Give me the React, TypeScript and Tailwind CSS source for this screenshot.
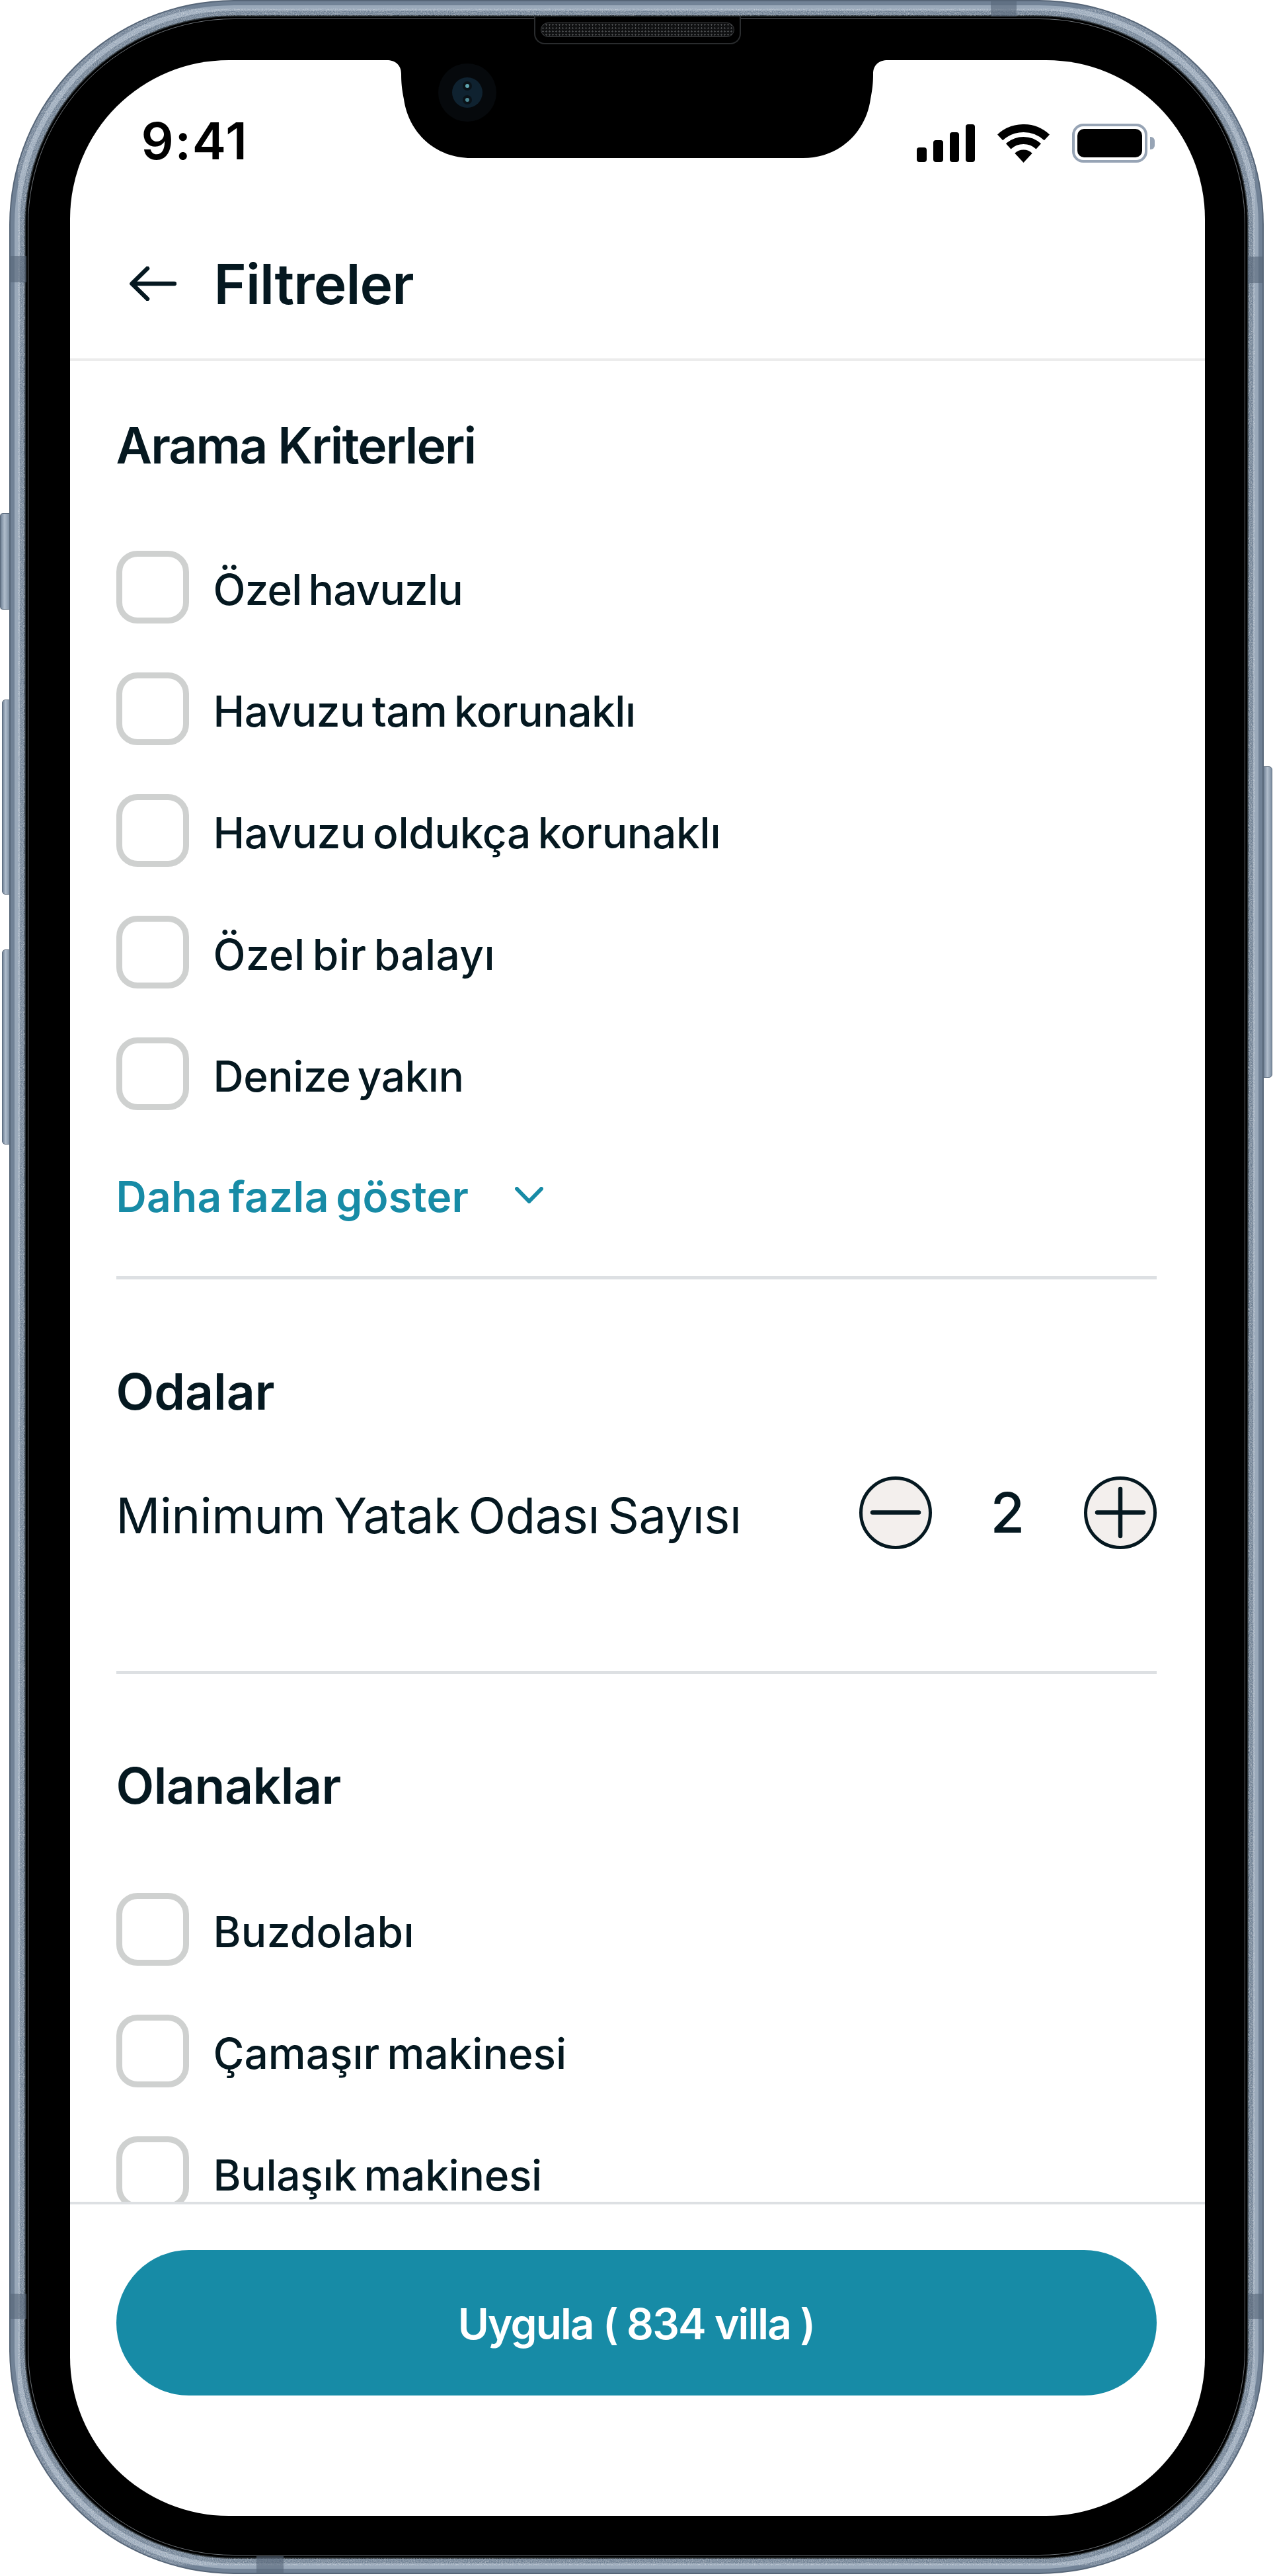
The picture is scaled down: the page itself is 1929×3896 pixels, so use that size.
import React from "react";

const ink = "#051820";

function CheckRow({ label, tracking }: { label: string; tracking: string }) {
  return (
    <div className="flex items-center h-[110px]">
      <div className="w-[110px] h-[110px] shrink-0 rounded-[32px] border-[9px] border-[#cfd1d0] bg-white" />
      <span className={`ml-[37px] mt-[9px] text-[64px] leading-[110px] font-medium [word-spacing:-6px] text-[#051820] ${tracking}`}>{label}</span>
    </div>
  );
}

function Heading({ children, className }: { children: React.ReactNode; className: string }) {
  return <h2 className={`text-[75px] leading-[100px] font-semibold text-[#051820] ${className}`}>{children}</h2>;
}

function Stepper({ plus }: { plus?: boolean }) {
  return (
    <svg viewBox="0 0 110 110" className="w-[110px] h-[110px] shrink-0">
      <circle cx="55" cy="55" r="52.5" fill="#f3efed" stroke={ink} strokeWidth="5" />
      <path d={plus ? "M20 54.5H90M55 19V90" : "M20 54.5H90"} stroke={ink} strokeWidth="6.5" strokeLinecap="round" fill="none" />
    </svg>
  );
}

function SideButton({ className }: { className: string }) {
  return <div className={`absolute bg-[linear-gradient(90deg,#718296,#b0bdcc_45%,#7f90a3)] border border-[#5a6a7c] ${className}`} />;
}

function Band({ className }: { className: string }) {
  return <div className={`absolute bg-[#566678]/60 ${className}`} />;
}

export default function App() {
  return (
    <div className="relative w-[1929px] h-[3896px] bg-white font-['Inter',sans-serif] overflow-hidden">
      <SideButton className="left-0 top-[776px] w-[15px] h-[146px] rounded-l-[4px]" />
      <SideButton className="left-[3px] top-[1058px] w-[12px] h-[295px] rounded-l-[5px]" />
      <SideButton className="left-[3px] top-[1436px] w-[12px] h-[295px] rounded-l-[5px]" />
      <SideButton className="left-[1911px] top-[1159px] w-[14px] h-[471px] rounded-r-[5px]" />

      {/* Phone body: metal rings, black bezel, screen */}
      <div className="ml-[14px] mt-0 w-[1898px] h-[3893px] rounded-[340px] bg-[#566577] p-[2px]">
        <div className="w-full h-full rounded-[338px] bg-[#718296] p-[6px]">
          <div className="w-full h-full rounded-[332px] bg-[#9aa9ba] p-[8px]">
            <div className="w-full h-full rounded-[324px] bg-[#708194] p-[7px]">
              <div className="w-full h-full rounded-[317px] bg-[#2b3339] p-[2px]">
                <div className="w-full h-full rounded-[315px] bg-black p-[3px]">
                  <div className="w-full h-full rounded-[312px] border-[1.5px] border-[#6a6f74] bg-black pl-[62.5px] pr-[55px] pt-[61.5px] pb-[51px]">
                    {/* Screen */}
                    <div className="w-[1717px] h-[3714px] rounded-[240px] bg-white overflow-hidden flex flex-col">
                      <div className="h-[246px] shrink-0 flex items-center justify-between pl-[108px] pr-[76px]">
                        <span className="text-[77px] font-semibold tracking-[1.7px] text-black">9:41</span>
                        <div className="flex items-center gap-[34px] mt-[6px]">
                          <svg viewBox="0 0 88 57" className="w-[88px] h-[57px]" fill="#000">
                            <rect x="0" y="35" width="15" height="22" rx="4" />
                            <rect x="25" y="24" width="15" height="33" rx="4" />
                            <rect x="50" y="12" width="14" height="45" rx="4" />
                            <rect x="74" y="0" width="14" height="57" rx="4" />
                          </svg>
                          <svg viewBox="0 0 79 58" className="w-[79px] h-[58px]">
                            <path d="M4.1 19.9A52 52 0 0 1 74.9 19.9" fill="none" stroke="#000" strokeWidth="12" />
                            <path d="M16.7 33.4A33.5 33.5 0 0 1 62.3 33.4" fill="none" stroke="#000" strokeWidth="11" />
                            <path d="M39.5 58L26.3 43.8A19.4 19.4 0 0 1 52.7 43.8Z" fill="#000" />
                          </svg>
                          <div className="flex items-center">
                            <div className="w-[114px] h-[59px] rounded-[17px] border-[4px] border-[#97a4b5] p-[4px]">
                              <div className="w-full h-full rounded-[10px] bg-black" />
                            </div>
                            <div className="ml-[4px] w-[7px] h-[19px] rounded-r-[6px] bg-[#97a4b5]" />
                          </div>
                        </div>
                      </div>

                      <div className="h-[209px] shrink-0 flex items-center pl-[90px] pb-[18px] border-b-[4px] border-[#ececec]">
                        <svg viewBox="0 0 71 52" className="w-[71px] h-[52px] -mt-[3px]" fill="none" stroke={ink} strokeWidth="6.5" strokeLinecap="round" strokeLinejoin="round">
                          <path d="M68 26H4M27 3L3.5 26L27 49" />
                        </svg>
                        <span className="ml-[57px] text-[84px] leading-none font-semibold tracking-[-0.9px] text-[#051820]">Filtreler</span>
                      </div>

                      <div className="flex-1 min-h-0 overflow-hidden pl-[70px] pr-[73px] pt-[78px]">
                        <Heading className="tracking-[-1.9px]">Arama Kriterleri</Heading>
                        <div className="mt-[109px] flex flex-col gap-[74px]">
                          <CheckRow label="Özel havuzlu" tracking="tracking-[-0.9px]" />
                          <CheckRow label="Havuzu tam korunaklı" tracking="tracking-[-0.5px]" />
                          <CheckRow label="Havuzu oldukça korunaklı" tracking="tracking-[-0.3px]" />
                          <CheckRow label="Özel bir balayı" tracking="tracking-[0.36px]" />
                          <CheckRow label="Denize yakın" tracking="tracking-[-0.5px]" />
                        </div>
                        <div className="mt-[91px] h-[80px] flex items-center">
                          <span className="text-[64px] font-semibold tracking-[0.3px] [word-spacing:-6px] text-[#178ba6]">Daha fazla göster</span>
                          <svg viewBox="0 0 43 25" className="ml-[70px] w-[43px] h-[25px] -mt-[5px]" fill="none" stroke="#178ba6" strokeWidth="6" strokeLinecap="round" strokeLinejoin="round">
                            <path d="M3 3L21.5 22L40 3" />
                          </svg>
                        </div>
                        <div className="mt-[80px] h-[5px] bg-[#dde0e3]" />

                        <Heading className="mt-[120px] tracking-[0px]">Odalar</Heading>
                        <div className="mt-[78px] h-[110px] flex items-center justify-between">
                          <span className="mt-[10px] text-[74px] tracking-[-0.4px] [word-spacing:-8px] text-[#051820]">Minimum Yatak Odası Sayısı</span>
                          <div className="flex items-center">
                            <Stepper />
                            <span className="w-[230px] text-center text-[84px] font-medium text-[#051820]">2</span>
                            <Stepper plus />
                          </div>
                        </div>
                        <div className="mt-[184px] h-[5px] bg-[#dde0e3]" />

                        <Heading className="mt-[119px] tracking-[-0.45px]">Olanaklar</Heading>
                        <div className="mt-[112px] flex flex-col gap-[74px]">
                          <CheckRow label="Buzdolabı" tracking="tracking-[0.3px]" />
                          <CheckRow label="Çamaşır makinesi" tracking="tracking-[0px]" />
                          <CheckRow label="Bulaşık makinesi" tracking="tracking-[-0.3px]" />
                        </div>
                      </div>

                      <div className="h-[475px] shrink-0 border-t-[4px] border-[#dde0e3] pl-[70px] pr-[73px] pt-[69px]">
                        <div className="h-[220px] rounded-[110px] bg-[#178ba6] flex items-center justify-center">
                          <span className="mt-[4px] text-[64px] font-semibold tracking-[-1.9px] text-white">Uygula ( 834 villa )</span>
                        </div>
                      </div>
                    </div>
                  </div>
                </div>
              </div>
            </div>
          </div>
        </div>
      </div>

      {/* Brushed texture of the metal rim */}
      <svg viewBox="0 0 1929 3896" className="absolute left-0 top-0 w-[1929px] h-[3896px] pointer-events-none">
        <defs>
          <filter id="grain" x="0" y="0" width="100%" height="100%">
            <feTurbulence type="fractalNoise" baseFrequency="0.7" numOctaves="2" seed="4" result="n" />
            <feColorMatrix in="n" type="matrix" values="0 0 0 0 1  0 0 0 0 1  0 0 0 0 1  1.6 0 0 0 -0.55" result="w" />
            <feComposite in="w" in2="SourceAlpha" operator="in" />
          </filter>
        </defs>
        <rect x="27" y="13" width="1872" height="3867" rx="327" fill="none" stroke="#fff" strokeWidth="22" filter="url(#grain)" opacity="0.55" />
      </svg>

      {/* Antenna bands on the metal rim */}
      <Band className="left-[14px] top-[387px] w-[26px] h-[40px]" />
      <Band className="left-[14px] top-[3469px] w-[26px] h-[38px]" />
      <Band className="left-[1888px] top-[388px] w-[24px] h-[40px]" />
      <Band className="left-[1888px] top-[3469px] w-[24px] h-[38px]" />
      <Band className="left-[1499px] top-0 w-[39px] h-[25px]" />
      <Band className="left-[388px] top-[3866px] w-[41px] h-[27px]" />

      {/* Notch */}
      <svg viewBox="575 88 778 152" className="absolute left-[575px] top-[88px] w-[778px] h-[152px]">
        <path d="M575 88H1353V91H1343C1330 91 1321 98 1321 112C1321 125 1320 135 1317 150C1310 200 1270 239 1215 239H713C658 239 618 200 611 150C608 135 607 125 607 112C607 98 598 91 585 91H575Z" fill="#000" />
      </svg>

      {/* Earpiece */}
      <div className="absolute left-[808px] top-[25px] w-[313px] h-[42px] rounded-b-[16px] bg-black border-x-[2px] border-b-[2px] border-[#2a2c2e] flex items-center justify-center">
        <div className="w-[293px] h-[22px] rounded-[11px] bg-[#101112] border border-[#3a3c3e] bg-[radial-gradient(circle,#4a4c4e_1px,transparent_1.4px)] bg-[length:5px_5px]" />
      </div>

      {/* Front camera */}
      <div className="absolute left-[663px] top-[96px] w-[88px] h-[88px] rounded-full bg-[#06090c] flex items-center justify-center">
        <div className="w-[46px] h-[46px] rounded-full bg-[#0f2230] flex flex-col items-center justify-center gap-[7px]">
          <div className="w-[14px] h-[14px] rounded-full bg-[#0a1218] flex items-center justify-center">
            <div className="w-[6px] h-[6px] rounded-full bg-[#5fa5b0]" />
          </div>
          <div className="w-[14px] h-[14px] rounded-full bg-[#0a1218] flex items-center justify-center">
            <div className="w-[6px] h-[6px] rounded-full bg-[#4d8a96]" />
          </div>
        </div>
      </div>
    </div>
  );
}
